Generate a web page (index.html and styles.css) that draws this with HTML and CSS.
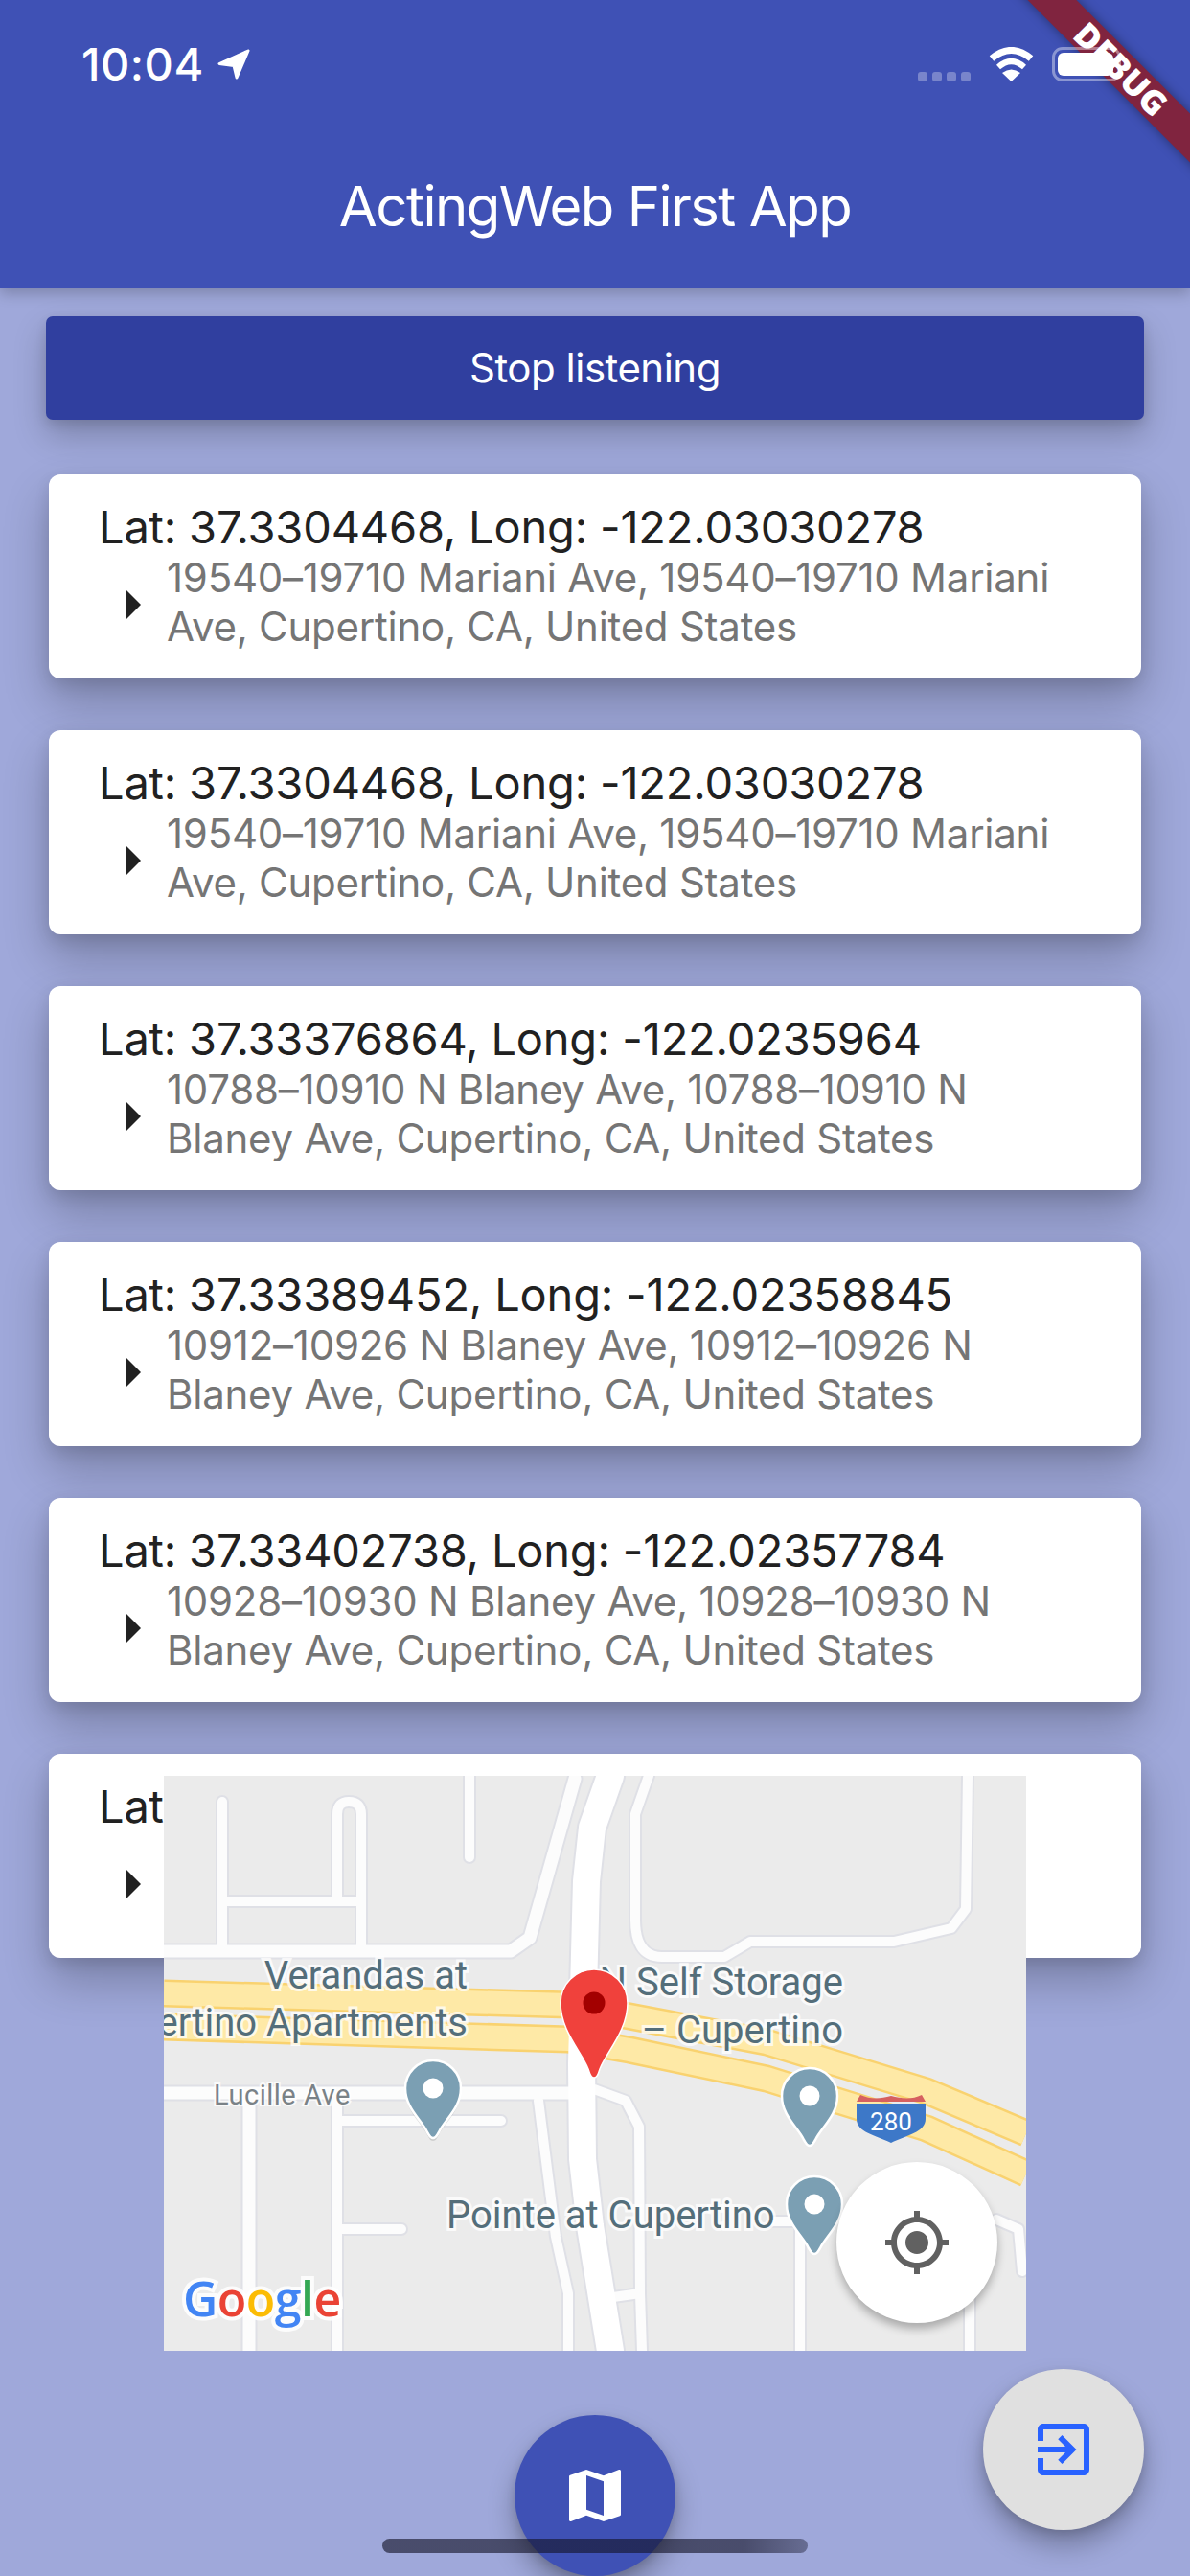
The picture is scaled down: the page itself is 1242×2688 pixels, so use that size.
FILE: index.html
```html
<!DOCTYPE html>
<html lang="en">
<head>
<meta charset="utf-8">
<title>ActingWeb First App</title>
<link rel="stylesheet" href="styles.css">
</head>
<body>
<div class="screen">
  <header class="appbar">
    <div class="status">
      <div class="status-left">
        <span class="clock">10:04</span>
        <svg class="arrow" viewBox="0 0 34 32"><path d="M32 2 2 15.500 17 17.500 20 30Z" fill="#fff" stroke="#fff" stroke-width="3" stroke-linejoin="round"/></svg>
      </div>
      <div class="status-right">
        <div class="signal"><i></i><i></i><i></i><i></i></div>
        <svg class="wifi" viewBox="0 0 47 36"><path d="M3 12Q23.500-5 44 12" fill="none" stroke="#fff" stroke-width="7"/><path d="M10 21Q23.500 9 37 21" fill="none" stroke="#fff" stroke-width="6"/><path d="M23.500 36 14 27Q23.500 20 33 27Z" fill="#fff"/></svg>
        <div class="battery"><div class="battery-level"></div></div>
      </div>
    </div>
    <h1 class="title">ActingWeb First App</h1>
  </header>

  <main class="content">
    <button class="stop">Stop listening</button>
    <ul class="list">
      <li class="card">
        <div class="lat">Lat: 37.3304468, Long: -122.03030278</div>
        <div class="row"><span class="tri"></span><p class="addr">19540–19710 Mariani Ave, 19540–19710 Mariani Ave, Cupertino, CA, United States</p></div>
      </li>
      <li class="card">
        <div class="lat">Lat: 37.3304468, Long: -122.03030278</div>
        <div class="row"><span class="tri"></span><p class="addr">19540–19710 Mariani Ave, 19540–19710 Mariani Ave, Cupertino, CA, United States</p></div>
      </li>
      <li class="card">
        <div class="lat">Lat: 37.33376864, Long: -122.0235964</div>
        <div class="row"><span class="tri"></span><p class="addr">10788–10910 N Blaney Ave, 10788–10910 N Blaney Ave, Cupertino, CA, United States</p></div>
      </li>
      <li class="card">
        <div class="lat">Lat: 37.33389452, Long: -122.02358845</div>
        <div class="row"><span class="tri"></span><p class="addr">10912–10926 N Blaney Ave, 10912–10926 N Blaney Ave, Cupertino, CA, United States</p></div>
      </li>
      <li class="card">
        <div class="lat">Lat: 37.33402738, Long: -122.02357784</div>
        <div class="row"><span class="tri"></span><p class="addr">10928–10930 N Blaney Ave, 10928–10930 N Blaney Ave, Cupertino, CA, United States</p></div>
      </li>
      <li class="card">
        <div class="lat">Lat: 37.33415, Long: -122.02356</div>
        <div class="row"><span class="tri"></span><p class="addr">10932–10950 N Blaney Ave, 10932–10950 N Blaney Ave, Cupertino, CA, United States</p></div>
      </li>
    </ul>
  </main>

  <section class="map">
    <svg class="map-art" viewBox="0 0 900 600">
      <defs>
        <g id="thin">
          <path d="M61 27V183"/>
          <path d="M181 129V40Q181 27 193 27Q206 27 206 40V183"/>
          <path d="M61 131H206"/>
          <path d="M319 0V85"/>
          <path d="M181 339V600"/>
          <path d="M181 360H352"/>
          <path d="M181 473H248"/>
          <path d="M391 339 409 481 422 540V600"/>
          <path d="M506 0 492 40V150Q492 189 520 189H585L612 173H762L822 159 837 139 839 0"/>
          <path d="M449 327 482 339 496 366 497 540 499 600"/>
          <path d="M469 544 497 540"/>
          <path d="M636 465H664V600"/>
          <path d="M841 520V600"/>
          <path d="M869 463 892 473 896 517"/>
        </g>
        <g id="mid">
          <path d="M0 183H362L382 169 429 3"/>
          <path d="M0 331H425"/>
          <path d="M89 339V600"/>
        </g>
        <path id="main" d="M466 0 447 54 441 110 436 300 437 400 445 470 466 600"/>
        <path id="hwy-a" d="M0 227 422 239 486 251 629 278 796 329 900 373"/>
        <path id="hwy-b" d="M0 262 422 275 486 286 629 316 796 368 900 415"/>
        <path id="pin" d="M0 81C-3 81-4 78-6 75-12 62-29 50-29 29A29 29 0 0 1 29 29C29 50 12 62 6 75 4 78 3 81 0 81Z"/>
      </defs>
      <rect class="land" width="900" height="600"/>
      <use href="#thin" class="case thin-case"/>
      <use href="#mid" class="case mid-case"/>
      <use href="#main" class="case main-case"/>
      <use href="#thin" class="road thin-road"/>
      <use href="#mid" class="road mid-road"/>
      <use href="#hwy-a" class="hwy-edge"/>
      <use href="#hwy-b" class="hwy-edge"/>
      <use href="#hwy-a" class="hwy"/>
      <use href="#hwy-b" class="hwy"/>
      <use href="#main" class="road main-road"/>

      <text class="label" x="317" y="222" text-anchor="end">Verandas at</text>
      <text class="label" x="317" y="271" text-anchor="end">Cupertino Apartments</text>
      <text class="street" x="52" y="343">Lucille Ave</text>
      <text class="label" x="295" y="472">Pointe at Cupertino</text>
      <text class="label" x="709" y="229" text-anchor="end">N Self Storage</text>
      <text class="label" x="709" y="279" text-anchor="end">– Cupertino</text>

      <path class="shield-blue" d="M723 342H795V358C795 372 775 375 759 383 743 375 723 372 723 358Z"/>
      <path class="shield-red" d="M723 340 727 333C738 338 748 337 759 334 770 337 781 338 791 333L795 340Z"/>
      <text class="shield-text" x="759" y="370" text-anchor="middle">280</text>

      <use href="#pin" class="pin-shadow" x="281" y="300"/>
      <use href="#pin" class="pin" x="281" y="297"/>
      <circle class="pin-hole" cx="281" cy="326" r="10.500"/>
      <use href="#pin" class="pin" x="674" y="305"/>
      <circle class="pin-hole" cx="674" cy="334" r="10.500"/>
      <use href="#pin" class="pin" x="679" y="418"/>
      <circle class="pin-hole" cx="679" cy="447" r="10.500"/>

      <path class="red-pin" d="M449 315C445 315 445 311 443 306 436 288 414 266 414 237A35 35 0 0 1 484 237C484 266 462 288 455 306 453 311 453 315 449 315Z"/>
      <circle class="red-hole" cx="449" cy="237" r="11.500"/>

      <text class="google" x="20" y="564"><tspan class="g-blue">G</tspan><tspan class="g-red">o</tspan><tspan class="g-yellow">o</tspan><tspan class="g-blue">g</tspan><tspan class="g-green">l</tspan><tspan class="g-red">e</tspan></text>
    </svg>
    <button class="locate">
      <svg viewBox="0 0 24 24"><path d="M12 8c-2.210 0-4 1.790-4 4s1.790 4 4 4 4-1.790 4-4-1.790-4-4-4zm8.940 3c-.46-4.170-3.770-7.480-7.940-7.940V1h-2v2.060C6.830 3.520 3.520 6.830 3.060 11H1v2h2.060c.46 4.170 3.770 7.480 7.940 7.940V23h2v-2.060c4.170-.46 7.480-3.770 7.940-7.940H23v-2h-2.060zM12 19c-3.870 0-7-3.130-7-7s3.130-7 7-7 7 3.130 7 7-3.130 7-7 7z"/></svg>
    </button>
  </section>

  <button class="fab fab-map">
    <svg viewBox="0 0 24 24"><path d="M20.500 3l-.16.03L15 5.100 9 3 3.360 4.900c-.21.07-.36.25-.36.48V20.500c0 .28.22.5.5.5l.16-.03L9 18.900l6 2.100 5.640-1.900c.21-.07.36-.25.36-.48V3.500c0-.28-.22-.5-.5-.5zM15 19l-6-2.110V5l6 2.110V19z"/></svg>
  </button>
  <button class="fab fab-exit">
    <svg viewBox="0 0 24 24"><path d="M10.090 15.590L11.500 17l5-5-5-5-1.410 1.410L12.670 11H3v2h9.670l-2.580 2.590zM19 3H5c-1.110 0-2 .9-2 2v4h2V5h14v14H5v-4H3v4c0 1.100.89 2 2 2h14c1.100 0 2-.9 2-2V5c0-1.100-.9-2-2-2z"/></svg>
  </button>
  <div class="home"></div>
  <div class="ribbon-clip"><div class="ribbon">DEBUG</div></div>
</div>
</body>
</html>
```

FILE: styles.css
```css
* { box-sizing: border-box; }
html, body { margin: 0; padding: 0; }
body { font-family: Inter, "Liberation Sans", sans-serif; background: #9fa8da; }
.screen { position: relative; width: 1242px; height: 2688px; overflow: hidden; background: #9fa8da; }

.appbar { position: relative; height: 300px; padding-top: 49px; background: #3f51b5; box-shadow: 0 6px 14px rgba(0,0,0,.22); color: #fff; }
.status { position: relative; z-index: 5; display: flex; justify-content: space-between; height: 36px; padding: 0 72px 0 85px; }
.status-left { display: flex; align-items: center; gap: 14px; }
.clock { font-size: 47px; font-weight: 500; line-height: 36px; letter-spacing: .5px; }
.arrow { width: 34px; height: 32px; }
.status-right { display: flex; align-items: flex-end; gap: 19px; }
.signal { display: flex; gap: 5px; }
.signal i { display: block; width: 10px; height: 10px; border-radius: 3px; background: rgba(255,255,255,.3); }
.wifi { display: block; width: 47px; height: 36px; }
.battery { width: 72px; height: 36px; padding: 3px; border: 3px solid rgba(255,255,255,.4); border-radius: 11px; }
.battery-level { width: 58px; height: 24px; border-radius: 6px; background: #fff; }
.title { margin: 90px 0 0; font-size: 58px; font-weight: 400; line-height: 80px; text-align: center; letter-spacing: -1.500px; }

.content { padding: 30px 48px 0; }
.stop { display: block; width: 100%; height: 108px; border: 0; border-radius: 7px; background: #303f9f; box-shadow: 0 16px 34px rgba(0,0,0,.22), 0 5px 12px rgba(0,0,0,.1); color: #fff; font: 400 42px/1 Inter, sans-serif; letter-spacing: -.5px; }
.list { display: flex; flex-direction: column; gap: 54px; margin: 57px 3px 0; padding: 0; list-style: none; }
.card { height: 213px; padding: 28px 48px 0 52px; border-radius: 12px; background: #fff; box-shadow: 0 24px 48px rgba(0,0,0,.24), 0 6px 16px rgba(0,0,0,.1); }
.lat { font-size: 47px; line-height: 54px; color: #212121; letter-spacing: -.2px; white-space: nowrap; }
.row { display: flex; align-items: center; }
.tri { flex: none; width: 0; height: 0; margin: 5px 27px 0 29px; border-style: solid; border-width: 15px 0 15px 15px; border-color: transparent transparent transparent #212121; }
.addr { margin: 0; font-size: 42px; line-height: 51px; color: #757575; letter-spacing: -.25px; }

.map { position: absolute; z-index: 3; left: 171px; top: 1853px; width: 900px; height: 600px; overflow: hidden; }
.map-art { display: block; width: 900px; height: 600px; }
.land { fill: #ebebeb; }
.case, .road, .hwy, .hwy-edge { fill: none; stroke-linecap: round; stroke-linejoin: round; }
.case { stroke: #dfe0e6; }
.road { stroke: #fcfcfc; }
.thin-case { stroke-width: 14px; }
.thin-road { stroke-width: 10px; }
.mid-case { stroke-width: 17px; }
.mid-road { stroke-width: 13px; }
.main-case { stroke-width: 32px; }
.main-road { stroke-width: 28px; stroke: #fff; }
.hwy-edge { stroke: #f9d26f; stroke-width: 29px; stroke-linecap: butt; }
.hwy { stroke: #fee9a6; stroke-width: 24px; stroke-linecap: butt; }
.label { font: 400 40px Roboto, sans-serif; fill: #546e7a; stroke: rgba(255,255,255,.75); stroke-width: 6px; paint-order: stroke; }
.street { font: 400 29px Roboto, sans-serif; fill: #7a8287; stroke: rgba(255,255,255,.8); stroke-width: 4px; paint-order: stroke; letter-spacing: .5px; }
.shield-blue { fill: #3d78c8; }
.shield-red { fill: #d66060; }
.shield-text { font: 400 26px Roboto, sans-serif; fill: #fff; }
.pin { fill: #7b9fb3; stroke: #fff; stroke-width: 2.500px; }
.pin-shadow { fill: rgba(0,0,0,.12); }
.pin-hole { fill: #fff; }
.red-pin { fill: #f0413c; stroke: #fff; stroke-width: 1.500px; }
.red-hole { fill: #a30000; }
.google { font: 600 50px "Open Sans", sans-serif; stroke: rgba(255,255,255,.85); stroke-width: 8px; paint-order: stroke; letter-spacing: -.5px; }
.g-blue { fill: #4285f4; }
.g-red { fill: #ea4335; }
.g-yellow { fill: #fbbc05; }
.g-green { fill: #34a853; }

.locate { position: absolute; left: 702px; top: 403px; display: flex; align-items: center; justify-content: center; width: 168px; height: 168px; padding: 0; border: 0; border-radius: 50%; background: #fff; box-shadow: 0 6px 10px rgba(0,0,0,.28); }
.locate svg { width: 72px; height: 72px; fill: #616161; }

.fab { position: absolute; z-index: 3; display: flex; align-items: center; justify-content: center; width: 168px; height: 168px; padding: 0; border: 0; border-radius: 50%; box-shadow: 0 16px 28px rgba(0,0,0,.28), 0 4px 10px rgba(0,0,0,.12); }
.fab svg { width: 72px; height: 72px; }
.fab-map { left: 537px; top: 2520px; background: #3f51b5; }
.fab-map svg { fill: #fff; }
.fab-exit { left: 1026px; top: 2472px; background: #e0e0e0; }
.fab-exit svg { fill: #2962ff; }
.home { position: absolute; z-index: 4; left: 399px; top: 2649px; width: 444px; height: 15px; border-radius: 8px; background: linear-gradient(90deg, rgba(20,20,40,.62) 0, rgba(20,20,40,.62) 85%, rgba(20,20,40,.4) 100%); }

.ribbon-clip { position: absolute; z-index: 4; right: 0; top: 0; width: 260px; height: 260px; overflow: hidden; pointer-events: none; }
.ribbon { position: absolute; left: 18px; top: 54px; width: 340px; height: 36px; transform: rotate(45deg); background: #80243f; box-shadow: 0 0 12px rgba(0,0,0,.4); color: #fff; font: 800 35px/36px "Open Sans", sans-serif; text-align: center; }
```
